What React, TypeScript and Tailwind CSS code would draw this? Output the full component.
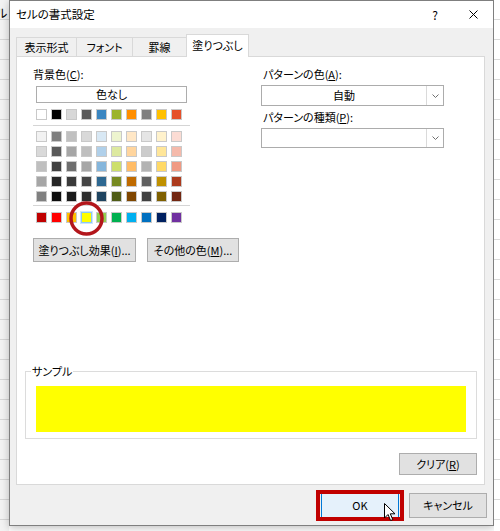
import React from 'react';
import { twMerge as cn } from 'tailwind-merge';

const themeRow = ['#ffffff', '#000000', '#d8d8d8', '#595959', '#3b86c1', '#9cb42b', '#ff8e00', '#7f7f7f', '#ffc000', '#e5502a'];

const shadeRows = [
  ['#f2f2f2', '#7f7f7f', '#c0c0c0', '#d9d9d9', '#d8e8f4', '#edf4cf', '#ffe7c6', '#e5e5e5', '#fff2cc', '#fbdcd4'],
  ['#d9d9d9', '#595959', '#a6a6a6', '#bfbfbf', '#b0d0ea', '#dde9a0', '#ffd59e', '#cccccc', '#ffe699', '#f5baab'],
  ['#bfbfbf', '#404040', '#6e6e6e', '#a6a6a6', '#85b6dc', '#cddf6c', '#ffbc66', '#b3b3b3', '#ffd966', '#f09a83'],
  ['#a6a6a6', '#262626', '#3a3a3a', '#454545', '#2e6891', '#778a22', '#bf6a00', '#606060', '#bf9000', '#ac3b1d'],
  ['#808080', '#0d0d0d', '#1a1a1a', '#2e2e2e', '#1f4460', '#4f5c17', '#7f4600', '#404040', '#7f6000', '#722711'],
];

const standardRow = ['#c00000', '#ff0000', '#ffc000', '#ffff00', '#92d050', '#00b050', '#00b0f0', '#0070c0', '#002060', '#7030a0'];

const tabs = [
  { label: '表示形式', w: 'w-[61px]' },
  { label: 'フォント', w: 'w-[57px]' },
  { label: '罫線', w: 'w-[55px]' },
  { label: '塗りつぶし', w: 'w-[63px]', active: true },
];

function Swatch({ color, selected }: { color: string; selected?: boolean }) {
  return (
    <div
      className={
        selected
          ? 'h-[11px] w-[11px] border border-[#8cc8f5] outline-1 outline-[#cde6fb]'
          : 'h-[11px] w-[11px] border border-[#c9c9c9]'
      }
      style={{ backgroundColor: color }}
    />
  );
}

function SwatchRow({ colors, selectedIndex }: { colors: string[]; selectedIndex?: number }) {
  return (
    <div className="ml-[3px] flex gap-[4px]">
      {colors.map((c, i) =>
        i === selectedIndex ? (
          <div key={i} className="relative">
            <Swatch color={c} selected />
            {/* red annotation circle */}
            <svg className="absolute -left-[12px] -top-[11px] h-[35px] w-[35px]" viewBox="0 0 35 35">
              <circle cx="17.5" cy="17.5" r="15.5" fill="none" stroke="#b3161b" strokeWidth="3.5" />
            </svg>
          </div>
        ) : (
          <Swatch key={i} color={c} />
        )
      )}
    </div>
  );
}

function Btn({ children, className }: { children: React.ReactNode; className?: string }) {
  return (
    <div className={cn('flex items-center justify-center border border-[#adadad] bg-[#e1e1e1] leading-none', className)}>
      {children}
    </div>
  );
}

function Select({ value, className }: { value?: string; className?: string }) {
  return (
    <div className={cn('flex border border-[#acacac] bg-white', className)}>
      <div className="flex flex-1 items-center justify-center">{value}</div>
      <div className="flex w-[17px] items-center justify-center border-l border-[#dadada]">
        <svg className="h-[4px] w-[7px]" viewBox="0 0 7 4">
          <path d="M0.5 0.5 L3.5 3.5 L6.5 0.5" fill="none" stroke="#707070" strokeWidth="1" />
        </svg>
      </div>
    </div>
  );
}

export default function App() {
  return (
    <div className="relative flex h-[531px] w-[500px] overflow-hidden bg-white font-['Noto_Sans_CJK_JP','Noto_Sans',sans-serif] text-[11px] text-black [font-feature-settings:'palt']">
      {/* excel sheet behind, left edge */}
      <div className="w-[9px] shrink-0 overflow-hidden bg-[repeating-linear-gradient(to_bottom,#f3f3f3_0,#f3f3f3_19px,#d6d6d6_19px,#d6d6d6_20px)]">
        <div className="-ml-[4px] mt-[5px] text-[12px] leading-[16px]">ル</div>
      </div>

      {/* dialog */}
      <div className="flex h-[526px] w-[485px] shrink-0 flex-col border border-[#7f7f7f] bg-[#f0f0f0] shadow-[0_2px_8px_rgba(0,0,0,0.25)]">
        <div className="flex h-[27px] items-center bg-white pl-[6px] pr-[15px]">
          <span className="flex-1 text-[11.5px]">セルの書式設定</span>
          <span className="mr-[29px] w-[10px] text-center text-[12px]">?</span>
          <svg className="h-[9px] w-[9px]" viewBox="0 0 9 9">
            <path d="M0.5 0.5 L8.5 8.5 M8.5 0.5 L0.5 8.5" stroke="#000" strokeWidth="1" />
          </svg>
        </div>

        {/* tabs */}
        <div className="flex h-[28px] items-end pl-[6px]">
          {tabs.map((t, i) =>
            t.active ? (
              <div
                key={t.label}
                className={cn(
                  'relative z-10 -mb-px -ml-px flex h-[23px] items-center justify-center border border-b-0 border-[#d9d9d9] bg-white pb-[1px]',
                  t.w
                )}
              >
                {t.label}
              </div>
            ) : (
              <div
                key={t.label}
                className={cn(
                  'flex h-[19px] items-center justify-center border border-b-0 border-[#d9d9d9] bg-[#f0f0f0]',
                  i > 0 && '-ml-px',
                  t.w
                )}
              >
                {t.label}
              </div>
            )
          )}
        </div>

        {/* tab panel */}
        <div className="ml-[6px] flex h-[429px] w-[469px] flex-col border border-[#d9d9d9] bg-white pl-[16px] pt-[9px]">
          <div className="flex">
            <div className="flex w-[157px] flex-col">
              <div className="leading-[16px]">
                背景色(<u>C</u>):
              </div>
              <div className="ml-[3px] mt-[4px] flex h-[17px] w-[151px] items-center justify-center border border-[#adadad] leading-none">
                色なし
              </div>
              <div className="mt-[6px]">
                <SwatchRow colors={themeRow} />
              </div>
              <div className="mt-[5px] h-px w-[157px] bg-[#d5d5d5]" />
              <div className="mt-[5px] flex flex-col gap-[4px]">
                {shadeRows.map((row, i) => (
                  <SwatchRow key={i} colors={row} />
                ))}
              </div>
              <div className="mt-[3px] h-px w-[157px] bg-[#d5d5d5]" />
              <div className="mt-[6px]">
                <SwatchRow colors={standardRow} selectedIndex={3} />
              </div>
            </div>

            <div className="ml-[71px] flex w-[183px] flex-col">
              <div className="pl-[2px] leading-[16px]">
                パターンの色(<u>A</u>):
              </div>
              <Select value="自動" className="mt-[3px] h-[21px]" />
              <div className="mt-[3px] pl-[2px] leading-[16px]">
                パターンの種類(<u>P</u>):
              </div>
              <Select className="mt-[3px] h-[20px]" />
            </div>
          </div>

          <div className="mt-[15px] flex gap-[11px]">
            <Btn className="h-[24px] w-[103px]">
              塗りつぶし効果(<u>I</u>)...
            </Btn>
            <Btn className="h-[24px] w-[92px]">
              その他の色(<u>M</u>)...
            </Btn>
          </div>

          {/* sample group box */}
          <div className="relative -ml-[8px] mt-[109px] h-[68px] w-[452px] border border-[#dcdcdc]">
            <span className="absolute -top-[9px] left-[5px] bg-white px-px leading-[16px]">サンプル</span>
            <div className="ml-[10px] mt-[14px] h-[46px] w-[430px] bg-[#ffff00]" />
          </div>

          <Btn className="mr-[7px] mt-[14px] h-[22px] w-[78px] self-end">
            クリア(<u>R</u>)
          </Btn>
        </div>

        {/* footer */}
        <div className="flex justify-end gap-[10px] pr-[6px] pt-[8px]">
          <div className="relative flex h-[25px] w-[78px] items-center justify-center border border-[#0078d7] bg-[#e5f1fb] leading-none">
            OK
            <div className="absolute -bottom-[4px] -left-[6px] -right-[6px] -top-[4px] border-[4px] border-[#c00000]" />
            <svg className="absolute left-[62px] top-[9px] h-[19px] w-[12px]" viewBox="0 0 12 19">
              <path d="M0.5 0.5 L0.5 15 L4 11.5 L6.6 17.5 L8.8 16.6 L6.3 10.8 L11 10.8 Z" fill="#fff" stroke="#000" strokeWidth="1" />
            </svg>
          </div>
          <Btn className="h-[25px] w-[78px]">キャンセル</Btn>
        </div>
      </div>

      {/* excel sheet behind, right edge */}
      <div className="flex-1 bg-[repeating-linear-gradient(to_bottom,#ffffff_0,#ffffff_19px,#dadada_19px,#dadada_20px)]" />
    </div>
  );
}
